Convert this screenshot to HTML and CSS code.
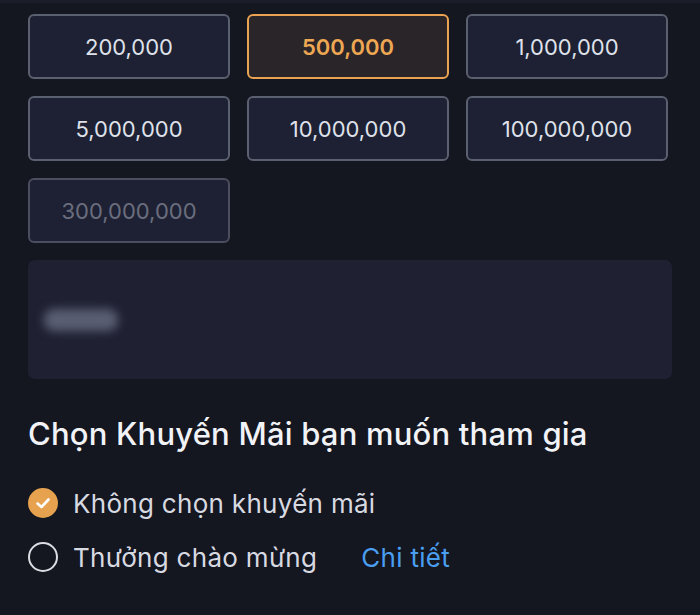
FILE: index.html
```html
<!DOCTYPE html>
<html lang="vi">
<head>
    <meta charset="UTF-8">
    <meta name="viewport" content="width=device-width, initial-scale=1.0">
    <title>Nạp tiền</title>
    <link rel="stylesheet" href="styles.css">
</head>
<body>
    <div class="amount-grid">
        <div class="amount">200,000</div>
        <div class="amount active">500,000</div>
        <div class="amount">1,000,000</div>
        <div class="amount">5,000,000</div>
        <div class="amount">10,000,000</div>
        <div class="amount">100,000,000</div>
        <div class="amount disabled">300,000,000</div>
    </div>

    <div class="info-panel">
        <div class="blur-pill"></div>
    </div>

    <h2 class="promo-title">Chọn Khuyến Mãi bạn muốn tham gia</h2>

    <div class="promo-list">
        <div class="promo-item">
            <span class="radio checked">
                <svg width="18" height="18" viewBox="0 0 18 18"><path d="M3.5 9.5 L7.5 13 L14.5 5.5" fill="none" stroke="#fff" stroke-width="2.6" stroke-linecap="round" stroke-linejoin="round"/></svg>
            </span>
            <span>Không chọn khuyến mãi</span>
        </div>
        <div class="promo-item">
            <span class="radio"></span>
            <span>Thưởng chào mừng</span>
            <a class="detail-link" href="#">Chi tiết</a>
        </div>
    </div>
</body>
</html>
```

FILE: styles.css
```css
body {
    margin: 0;
    background-color: #141620;
    border-top: 3px solid #1b1d29;
    font-family: Inter, "Noto Sans", sans-serif;
    color: #e4e6ee;
    padding: 11px 28px 0 28px;
}
.amount-grid {
    display: grid;
    grid-template-columns: repeat(3, 1fr);
    gap: 17px;
    margin-right: 4px;
}
.amount {
    height: 61px;
    border: 2px solid #5b6070;
    border-radius: 6px;
    background-color: #1e2133;
    display: flex;
    align-items: center;
    justify-content: center;
    font-size: 22px;
    color: #dfe2ea;
}
.amount.active {
    border-color: #e9a352;
    background-color: #2a2529;
    color: #eea752;
    font-weight: 600;
}
.amount.disabled { color: #6a6e7e; border-color: #4a4e5e; }
.info-panel {
    margin-top: 17px;
    height: 119px;
    background-color: #1f2133;
    border-radius: 7px;
    display: flex;
    align-items: center;
    padding-left: 16px;
}
.blur-pill {
    width: 74px;
    height: 22px;
    background-color: #5a5e72;
    border-radius: 10px;
    filter: blur(5px);
}
.promo-title {
    margin: 36px 0 0 0;
    font-size: 31px;
    font-weight: 500;
    letter-spacing: 0.2px;
    color: #f2f3f7;
}
.promo-list { margin-top: 24px; }
.promo-item {
    display: flex;
    align-items: center;
    height: 54px;
    font-size: 26px;
    letter-spacing: 0.3px;
    color: #d8dae2;
}
.radio {
    width: 26px;
    height: 26px;
    border: 2px solid #dcdde3;
    border-radius: 50%;
    margin-right: 15px;
    display: flex;
    align-items: center;
    justify-content: center;
}
.radio.checked { background-color: #e7a24f; border-color: #e7a24f; }
.detail-link {
    margin-left: 44px;
    color: #4a9ef0;
    text-decoration: none;
}
```
